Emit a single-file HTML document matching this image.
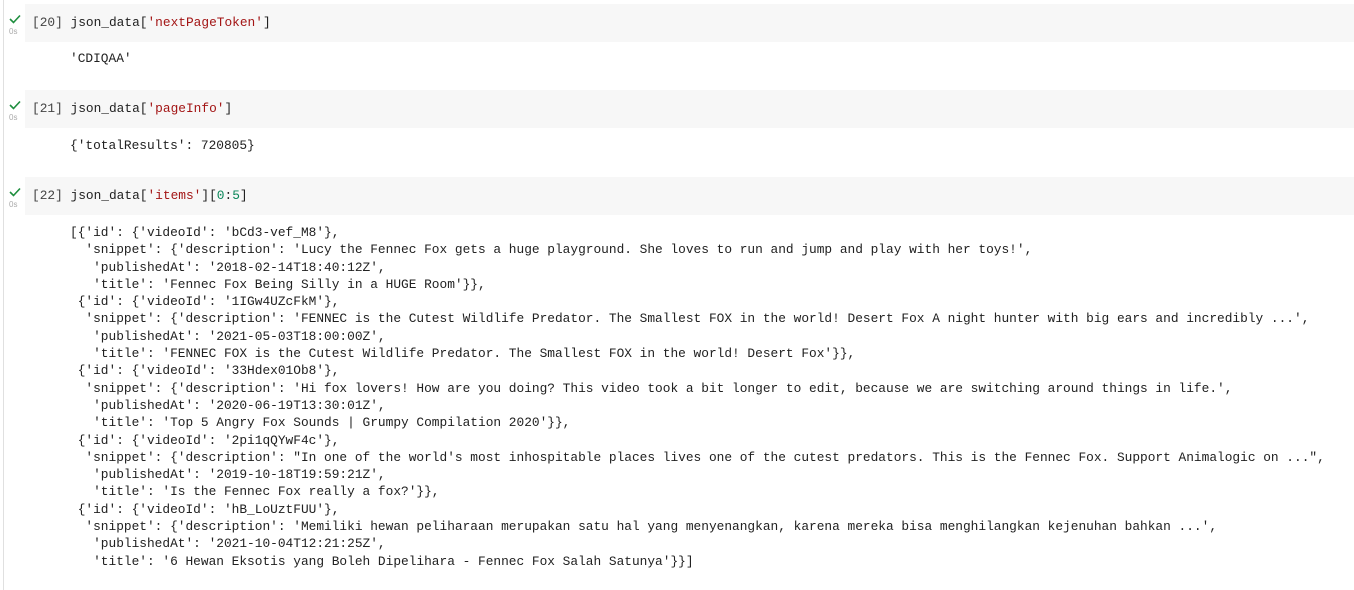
<!DOCTYPE html>
<html><head><style>
body{margin:0;width:1354px;height:590px;background:#fff;position:relative;overflow:hidden;font-family:"Liberation Mono",monospace;font-size:12.84px;color:#212121}
.vl{position:absolute;left:3px;top:0;width:1px;height:590px;background:#e0e0e0}
.in{position:absolute;left:25px;right:0;height:38px;background:#f7f7f7}
.t{position:absolute;white-space:pre;line-height:17.3px}
.s{color:#a31515}.n{color:#098658}
.ck{position:absolute;left:9px;width:12px;height:10px}
.os{position:absolute;left:9px;font-family:"Liberation Sans",sans-serif;font-size:8px;color:#aaa}
.num{color:#444}
</style></head><body>
<div class="vl"></div>

<div class="in" style="top:4px"></div>
<svg class="ck" style="top:14px" viewBox="0 0 12 10"><path d="M1 5 L4.5 8.5 L11 1.5" stroke="#1e8e3e" stroke-width="1.6" fill="none"/></svg>
<div class="os" style="top:27px">0s</div>
<div class="t" style="left:32px;top:14px"><span class="num">[20]</span> json_data[<span class="s">'nextPageToken'</span>]</div>
<div class="t" style="left:70px;top:50px">'CDIQAA'</div>

<div class="in" style="top:90px"></div>
<svg class="ck" style="top:100px" viewBox="0 0 12 10"><path d="M1 5 L4.5 8.5 L11 1.5" stroke="#1e8e3e" stroke-width="1.6" fill="none"/></svg>
<div class="os" style="top:113px">0s</div>
<div class="t" style="left:32px;top:100px"><span class="num">[21]</span> json_data[<span class="s">'pageInfo'</span>]</div>
<div class="t" style="left:70px;top:137px">{'totalResults': 720805}</div>

<div class="in" style="top:177px"></div>
<svg class="ck" style="top:187px" viewBox="0 0 12 10"><path d="M1 5 L4.5 8.5 L11 1.5" stroke="#1e8e3e" stroke-width="1.6" fill="none"/></svg>
<div class="os" style="top:200px">0s</div>
<div class="t" style="left:32px;top:187px"><span class="num">[22]</span> json_data[<span class="s">'items'</span>][<span class="n">0</span>:<span class="n">5</span>]</div>
<div class="t" style="left:70px;top:224px">[{'id': {'videoId': 'bCd3-vef_M8'},
  'snippet': {'description': 'Lucy the Fennec Fox gets a huge playground. She loves to run and jump and play with her toys!',
   'publishedAt': '2018-02-14T18:40:12Z',
   'title': 'Fennec Fox Being Silly in a HUGE Room'}},
 {'id': {'videoId': '1IGw4UZcFkM'},
  'snippet': {'description': 'FENNEC is the Cutest Wildlife Predator. The Smallest FOX in the world! Desert Fox A night hunter with big ears and incredibly ...',
   'publishedAt': '2021-05-03T18:00:00Z',
   'title': 'FENNEC FOX is the Cutest Wildlife Predator. The Smallest FOX in the world! Desert Fox'}},
 {'id': {'videoId': '33Hdex01Ob8'},
  'snippet': {'description': 'Hi fox lovers! How are you doing? This video took a bit longer to edit, because we are switching around things in life.',
   'publishedAt': '2020-06-19T13:30:01Z',
   'title': 'Top 5 Angry Fox Sounds | Grumpy Compilation 2020'}},
 {'id': {'videoId': '2pi1qQYwF4c'},
  'snippet': {'description': "In one of the world's most inhospitable places lives one of the cutest predators. This is the Fennec Fox. Support Animalogic on ...",
   'publishedAt': '2019-10-18T19:59:21Z',
   'title': 'Is the Fennec Fox really a fox?'}},
 {'id': {'videoId': 'hB_LoUztFUU'},
  'snippet': {'description': 'Memiliki hewan peliharaan merupakan satu hal yang menyenangkan, karena mereka bisa menghilangkan kejenuhan bahkan ...',
   'publishedAt': '2021-10-04T12:21:25Z',
   'title': '6 Hewan Eksotis yang Boleh Dipelihara - Fennec Fox Salah Satunya'}}]</div>
</body></html>
